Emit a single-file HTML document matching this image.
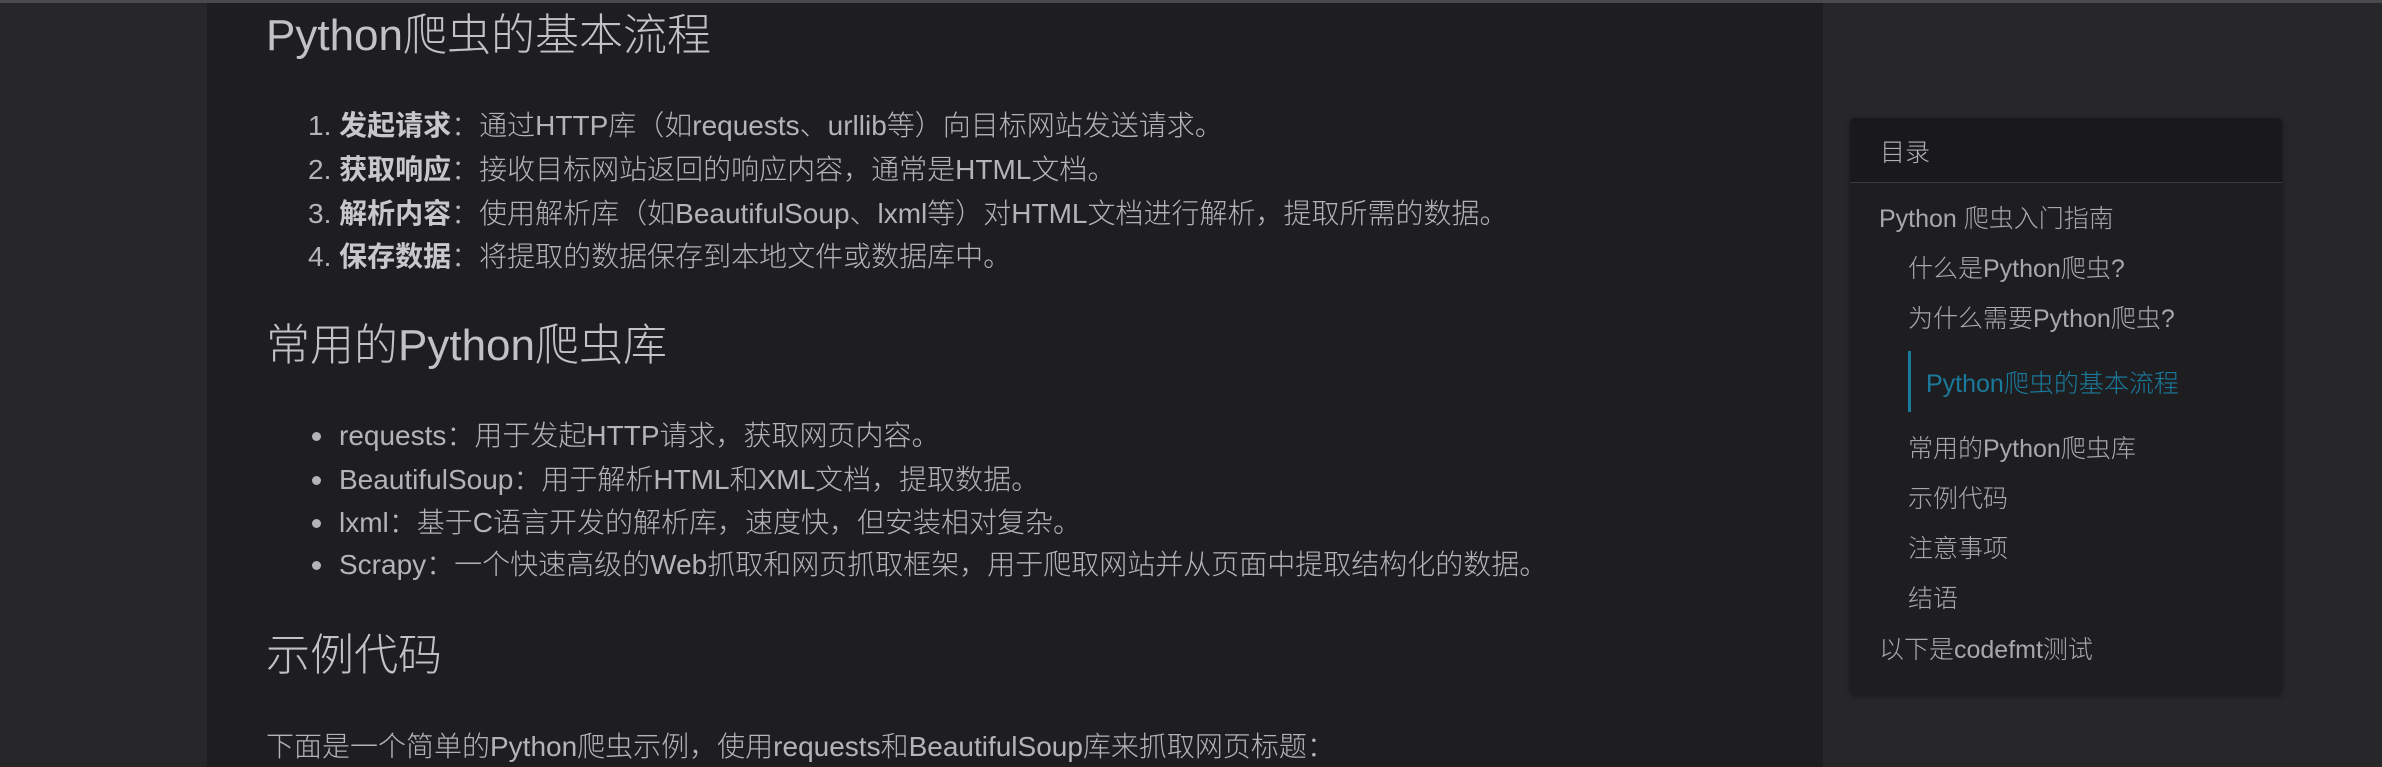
<!DOCTYPE html>
<html><head><meta charset="utf-8"><style>
html,body{margin:0;padding:0;}
body{width:2382px;height:767px;background:#27272a;position:relative;overflow:hidden;font-family:"Liberation Sans","Noto Sans CJK SC",sans-serif;font-weight:300;color:#b4b4b8;}
.top{position:absolute;left:0;top:0;width:2382px;height:3px;background:#4a4a4e;}
.panel{position:absolute;left:207px;top:3px;width:1616px;height:764px;background:#1e1e20;}
.t{position:absolute;white-space:nowrap;line-height:1;}
.h{font-size:44px;color:#c2c2c6;}
.li{font-size:28px;}
.li b{font-weight:700;color:#c8c8cc;}
.dot{position:absolute;width:9px;height:9px;border-radius:50%;background:#b4b4b8;}
.toc{position:absolute;left:1850px;top:118px;width:432px;height:576px;background:#1e1e21;border-radius:5px;box-shadow:0 2px 6px rgba(0,0,0,.4);}
.toch{position:absolute;left:0;top:0;width:432px;height:64px;background:#19191b;border-bottom:1px solid #3a3a3d;border-radius:5px 5px 0 0;}
.tc{font-size:25px;color:#a8a8ac;}
</style></head><body>
<div class="top"></div>
<div class="panel"></div>
<div class="t h" style="left:266px;top:14px;">Python爬虫的基本流程</div>
<div class="t li" style="left:308px;top:112px;">1. <b>发起请求</b>：通过HTTP库（如requests、urllib等）向目标网站发送请求。</div>
<div class="t li" style="left:308px;top:156px;">2. <b>获取响应</b>：接收目标网站返回的响应内容，通常是HTML文档。</div>
<div class="t li" style="left:308px;top:200px;">3. <b>解析内容</b>：使用解析库（如BeautifulSoup、lxml等）对HTML文档进行解析，提取所需的数据。</div>
<div class="t li" style="left:308px;top:243px;">4. <b>保存数据</b>：将提取的数据保存到本地文件或数据库中。</div>
<div class="t h" style="left:266px;top:324px;">常用的Python爬虫库</div>
<div class="dot" style="left:312px;top:432px;"></div>
<div class="t li" style="left:339px;top:422px;">requests：用于发起HTTP请求，获取网页内容。</div>
<div class="dot" style="left:312px;top:476px;"></div>
<div class="t li" style="left:339px;top:466px;">BeautifulSoup：用于解析HTML和XML文档，提取数据。</div>
<div class="dot" style="left:312px;top:519px;"></div>
<div class="t li" style="left:339px;top:509px;">lxml：基于C语言开发的解析库，速度快，但安装相对复杂。</div>
<div class="dot" style="left:312px;top:561px;"></div>
<div class="t li" style="left:339px;top:551px;">Scrapy：一个快速高级的Web抓取和网页抓取框架，用于爬取网站并从页面中提取结构化的数据。</div>
<div class="t h" style="left:266px;top:634px;">示例代码</div>
<div class="t li" style="left:266px;top:733px;">下面是一个简单的Python爬虫示例，使用requests和BeautifulSoup库来抓取网页标题：</div>

<div class="toc"><div class="toch"></div></div>
<div class="t tc" style="left:1880px;top:141px;color:#b0b0b4;">目录</div>
<div class="t tc" style="left:1879px;top:207px;">Python 爬虫入门指南</div>
<div class="t tc" style="left:1908px;top:257px;">什么是Python爬虫?</div>
<div class="t tc" style="left:1908px;top:307px;">为什么需要Python爬虫?</div>
<div style="position:absolute;left:1908px;top:351px;width:3px;height:61px;background:#1a7a9c;"></div>
<div class="t tc" style="left:1926px;top:372px;color:#1a7a9c;">Python爬虫的基本流程</div>
<div class="t tc" style="left:1908px;top:437px;">常用的Python爬虫库</div>
<div class="t tc" style="left:1908px;top:487px;">示例代码</div>
<div class="t tc" style="left:1908px;top:537px;">注意事项</div>
<div class="t tc" style="left:1908px;top:587px;">结语</div>
<div class="t tc" style="left:1879px;top:638px;">以下是codefmt测试</div>
</body></html>
